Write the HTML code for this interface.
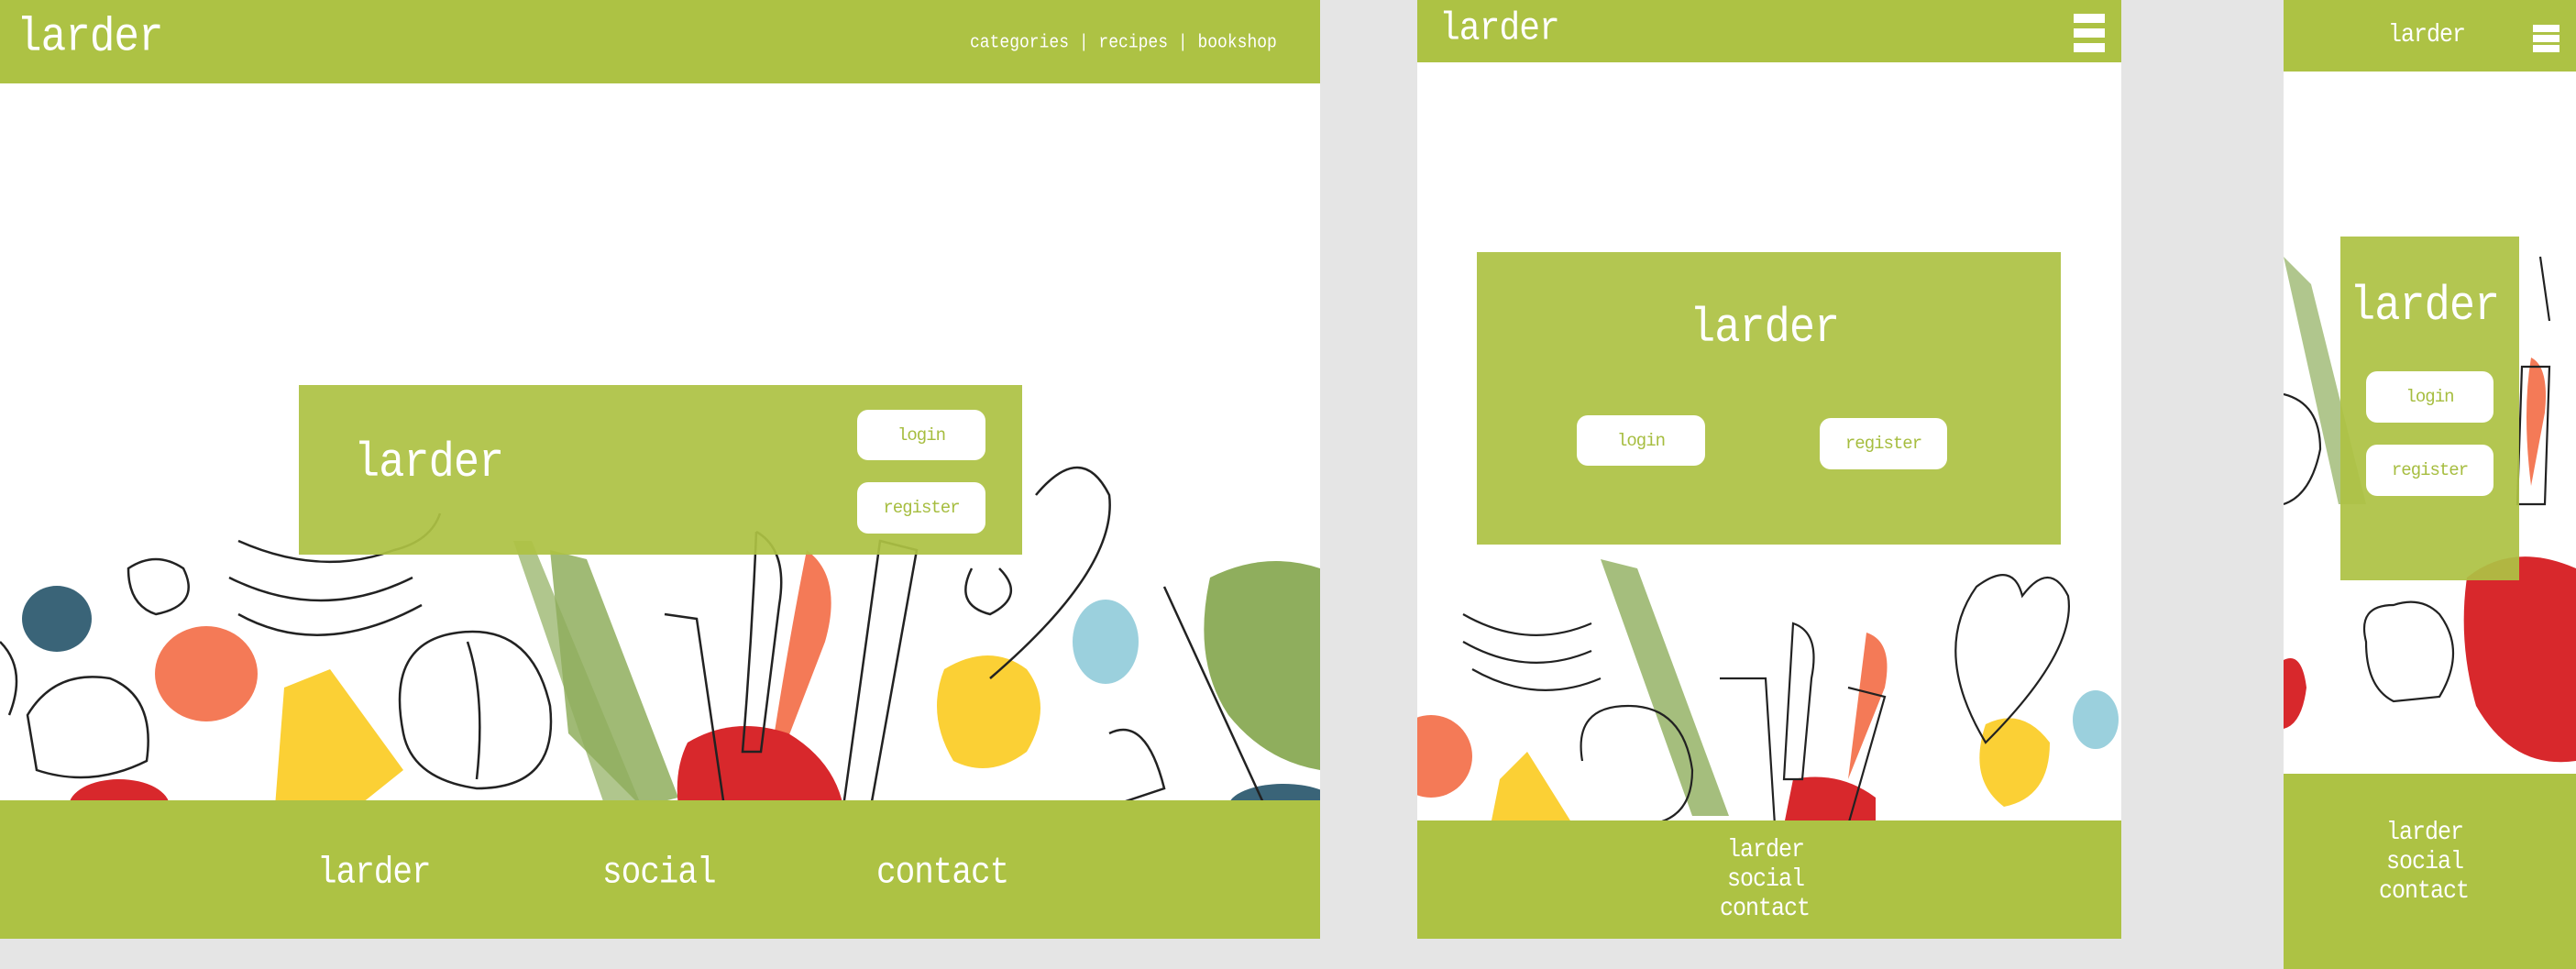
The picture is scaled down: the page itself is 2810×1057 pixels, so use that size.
<!DOCTYPE html>
<html><head><meta charset="utf-8"><style>
*{margin:0;padding:0;box-sizing:border-box}
body{width:2810px;height:1057px;background:#e5e5e5;position:relative;overflow:hidden;font-family:"Liberation Mono",monospace;color:#fff}
.abs{position:absolute}
.g{background:#adc244}
.card{background:rgba(173,194,68,0.93)}
.btn{position:absolute;background:#fff;border-radius:12px;color:#a6bd3f;font-size:19px;display:flex;align-items:center;justify-content:center;letter-spacing:-1px}
.t{position:absolute;white-space:nowrap;letter-spacing:-1px;transform:scaleY(1.12);transform-origin:0 100%}
.hb{position:absolute;background:#fff}
</style></head><body>

<!-- Panel 1 -->
<div class="abs" style="left:0;top:0;width:1440px;height:1024px;background:#fff;overflow:hidden">
  <svg class="abs" style="left:0;top:500px" width="1440" height="380" viewBox="0 0 1440 380">
    <g stroke="none">
      <ellipse cx="62" cy="175" rx="38" ry="36" fill="#3a6478"/>
      <ellipse cx="225" cy="235" rx="56" ry="52" fill="#f47a57"/>
      <path d="M310 250 L360 230 L440 340 L390 380 L300 380Z" fill="#fbd035"/>
      <ellipse cx="130" cy="380" rx="55" ry="30" fill="#d8282c"/>
      <path d="M600 100 L640 110 L740 370 L700 380 L620 300Z" fill="#8fae5d" opacity="0.85"/>
      <path d="M560 90 L580 90 L700 380 L660 380Z" fill="#8fae5d" opacity="0.7"/>
      <path d="M880 100 Q920 130 900 200 L850 330 L840 330 Q860 200 880 100Z" fill="#f47a57"/>
      <path d="M750 310 Q800 280 860 300 Q910 330 920 380 L740 380 Q735 340 750 310Z" fill="#d8282c"/>
      <path d="M1030 230 Q1080 200 1120 230 Q1150 270 1120 320 Q1080 350 1040 330 Q1010 280 1030 230Z" fill="#fbd035"/>
      <ellipse cx="1206" cy="200" rx="36" ry="46" fill="#9bd0dd"/>
      <path d="M1320 130 Q1380 100 1440 120 L1440 340 Q1380 330 1340 280 Q1300 220 1320 130Z" fill="#8fae5d"/>
      <ellipse cx="1400" cy="380" rx="60" ry="25" fill="#3a6478"/>
    </g>
    <g fill="none" stroke="#222" stroke-width="2.5">
      <path d="M260 90 Q350 130 430 100 Q470 90 480 60"/>
      <path d="M250 130 Q350 180 450 130"/>
      <path d="M260 170 Q350 220 460 160"/>
      <path d="M30 280 Q60 230 120 240 Q170 260 160 330 Q100 360 40 340 Z"/>
      <path d="M440 300 Q420 200 500 190 Q580 180 600 270 Q610 360 520 360 Q450 350 440 300Z"/>
      <path d="M510 200 Q530 260 520 350"/>
      <path d="M725 170 L760 175 L790 380"/>
      <path d="M825 80 Q860 100 850 160 L830 320 L810 320 Q820 200 825 80"/>
      <path d="M960 90 L1000 100 L950 380 L920 380Z"/>
      <path d="M1130 40 Q1180 -20 1210 40 Q1220 120 1080 240"/>
      <path d="M1060 120 Q1040 160 1080 170 Q1120 150 1090 120"/>
      <path d="M1270 140 L1380 380"/>
      <path d="M1210 300 Q1250 280 1270 360 L1210 380"/>
      <path d="M0 200 Q30 230 10 280"/>
      <path d="M140 120 Q170 100 200 120 Q220 160 170 170 Q140 160 140 120Z"/>
    </g>
  </svg>
  <div class="abs g" style="left:0;top:0;width:1440px;height:91px"></div>
  <div class="t" style="left:18px;top:18px;font-size:46px">larder</div>
  <div class="t" style="left:1058px;top:38px;font-size:18px;letter-spacing:0">categories | recipes | bookshop</div>
  <div class="abs card" style="left:326px;top:420px;width:789px;height:185px"></div>
  <div class="t" style="left:386px;top:483px;font-size:47px">larder</div>
  <div class="btn" style="left:935px;top:447px;width:140px;height:55px">login</div>
  <div class="btn" style="left:935px;top:526px;width:140px;height:56px">register</div>
  <div class="abs g" style="left:0;top:873px;width:1440px;height:151px"></div>
  <div class="t" style="left:346px;top:934px;font-size:36px">larder</div>
  <div class="t" style="left:657px;top:934px;font-size:36px">social</div>
  <div class="t" style="left:956px;top:934px;font-size:36px">contact</div>
</div>

<!-- Panel 2 -->
<div class="abs" style="left:1546px;top:0;width:768px;height:1024px;background:#fff;overflow:hidden">
  <svg class="abs" style="left:0;top:590px" width="768" height="310" viewBox="0 0 768 310">
    <g stroke="none">
      <ellipse cx="15" cy="235" rx="45" ry="45" fill="#f47a57"/>
      <path d="M90 260 L120 230 L170 310 L80 310Z" fill="#fbd035"/>
      <path d="M200 20 L240 30 L340 300 L300 300Z" fill="#8fae5d" opacity="0.8"/>
      <path d="M490 100 Q520 110 510 160 L470 260 Q480 180 490 100Z" fill="#f47a57"/>
      <path d="M410 260 Q460 250 500 280 L500 310 L400 310Z" fill="#d8282c"/>
      <path d="M620 200 Q660 180 690 220 Q690 280 640 290 Q600 260 620 200Z" fill="#fbd035"/>
      <ellipse cx="740" cy="195" rx="25" ry="32" fill="#9bd0dd"/>
    </g>
    <g fill="none" stroke="#222" stroke-width="2.2">
      <path d="M50 80 Q120 120 190 90"/><path d="M50 110 Q120 150 190 120"/><path d="M60 140 Q130 180 200 150"/>
      <path d="M180 240 Q170 180 230 180 Q290 180 300 250 Q300 310 240 310"/>
      <path d="M330 150 L380 150 L390 310"/><path d="M410 90 Q440 100 430 150 L420 260 L400 260Z"/>
      <path d="M470 160 L510 170 L470 310"/>
      <path d="M610 50 Q650 20 660 60 Q690 20 710 60 Q720 120 620 220 Q560 120 610 50Z"/>
    </g>
  </svg>
  <div class="abs g" style="left:0;top:0;width:768px;height:68px"></div>
  <div class="t" style="left:24px;top:13px;font-size:38px">larder</div>
  <div class="hb" style="left:716px;top:15px;width:34px;height:10px"></div>
  <div class="hb" style="left:716px;top:31px;width:34px;height:10px"></div>
  <div class="hb" style="left:716px;top:47px;width:34px;height:10px"></div>
  <div class="abs card" style="left:65px;top:275px;width:637px;height:319px"></div>
  <div class="t" style="left:297px;top:336px;font-size:47px">larder</div>
  <div class="btn" style="left:174px;top:453px;width:140px;height:55px">login</div>
  <div class="btn" style="left:439px;top:456px;width:139px;height:56px">register</div>
  <div class="abs g" style="left:0;top:895px;width:768px;height:129px"></div>
  <div class="t" style="left:338px;top:914px;font-size:25px">larder</div>
  <div class="t" style="left:338px;top:946px;font-size:25px">social</div>
  <div class="t" style="left:330px;top:978px;font-size:25px">contact</div>
</div>

<!-- Panel 3 -->
<div class="abs" style="left:2491px;top:0;width:319px;height:1057px;background:#fff;overflow:hidden">
  <svg class="abs" style="left:0;top:250px" width="319" height="600" viewBox="0 0 319 600">
    <g stroke="none">
      <path d="M0 30 L30 60 L90 300 L60 300 Z" fill="#8fae5d" opacity="0.7"/>
      <path d="M200 380 Q250 340 319 370 L319 580 Q250 590 210 520 Q190 450 200 380Z" fill="#d8282c"/>
      <path d="M0 470 Q20 460 25 500 Q20 540 0 545Z" fill="#d8282c"/>
      <path d="M270 140 Q290 150 285 200 L270 280 Q260 200 270 140Z" fill="#f47a57"/>
    </g>
    <g fill="none" stroke="#222" stroke-width="2.2">
      <path d="M90 450 Q80 410 120 410 Q150 400 170 420 Q200 460 170 510 L120 515 Q90 500 90 450Z"/>
      <path d="M0 180 Q40 190 40 240 Q30 290 0 300"/>
      <path d="M260 150 L290 150 L285 300 L255 300Z"/>
      <path d="M280 30 L290 100"/>
    </g>
  </svg>
  <div class="abs g" style="left:0;top:0;width:319px;height:78px"></div>
  <div class="t" style="left:114px;top:25px;font-size:25px">larder</div>
  <div class="hb" style="left:272px;top:27px;width:29px;height:8px"></div>
  <div class="hb" style="left:272px;top:38px;width:29px;height:8px"></div>
  <div class="hb" style="left:272px;top:49px;width:29px;height:8px"></div>
  <div class="abs card" style="left:62px;top:258px;width:195px;height:375px"></div>
  <div class="t" style="left:72px;top:312px;font-size:47px">larder</div>
  <div class="btn" style="left:90px;top:405px;width:139px;height:56px">login</div>
  <div class="btn" style="left:90px;top:485px;width:139px;height:56px">register</div>
  <div class="abs g" style="left:0;top:844px;width:319px;height:213px"></div>
  <div class="t" style="left:112px;top:895px;font-size:25px">larder</div>
  <div class="t" style="left:112px;top:927px;font-size:25px">social</div>
  <div class="t" style="left:104px;top:959px;font-size:25px">contact</div>
</div>
</body></html>
